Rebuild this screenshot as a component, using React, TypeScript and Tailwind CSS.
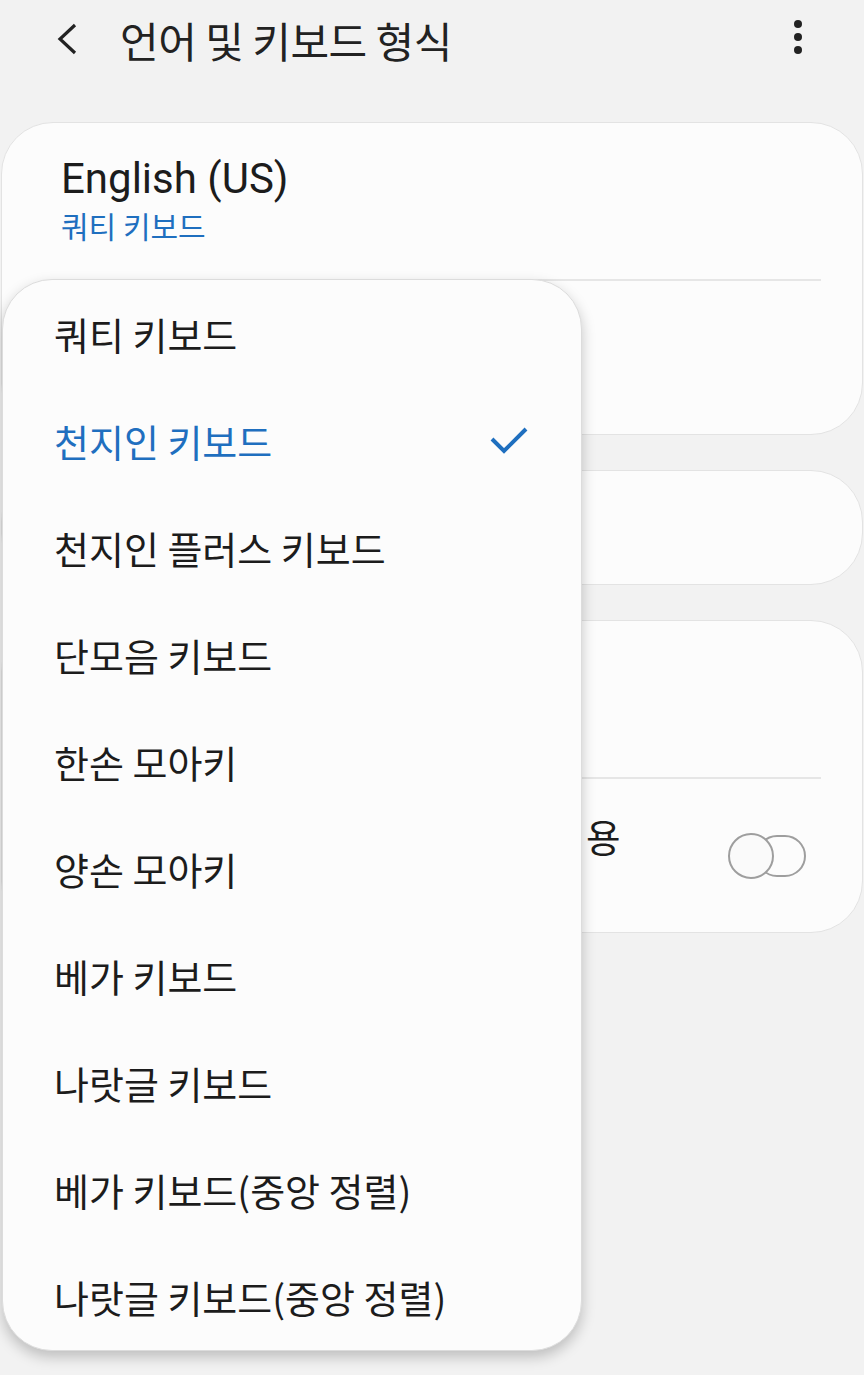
import React from 'react';

const KR = "font-['Noto_Sans_CJK_KR','Noto_Sans',sans-serif]";
const EN = "font-['Roboto','Noto_Sans_CJK_KR',sans-serif]";

const options = [
  '쿼티 키보드',
  '천지인 키보드',
  '천지인 플러스 키보드',
  '단모음 키보드',
  '한손 모아키',
  '양손 모아키',
  '베가 키보드',
  '나랏글 키보드',
  '베가 키보드(중앙 정렬)',
  '나랏글 키보드(중앙 정렬)',
];

function Toggle() {
  return (
    <div className="relative w-[78px] h-[46px]">
      <div className="absolute right-0 top-[2px] w-[50px] h-[42px] rounded-full border-2 border-[#9e9e9e]" />
      <div className="absolute left-0 top-0 w-[46px] h-[46px] rounded-full border-2 border-[#9e9e9e] bg-[#fafafa]" />
    </div>
  );
}

export default function App() {
  const selected = 1;

  return (
    <div className={`relative w-[864px] h-[1375px] bg-[#f2f2f2] overflow-hidden ${KR}`}>
      {/* top bar */}
      <div className="flex items-center h-[80px] pl-[54px] pr-[62px]">
        <svg width="26" height="34" viewBox="0 0 26 34" className="mt-[-2px]">
          <path d="M21 3 L6 17 L21 31" fill="none" stroke="#222" strokeWidth="3.2" />
        </svg>
        <span className="ml-[40px] text-[42px] leading-[50px] text-[#222] tracking-[-0.5px]">언어 및 키보드 형식</span>
        <div className="ml-auto flex flex-col gap-[5px] mt-[-6px]">
          <span className="block w-[8px] h-[8px] rounded-full bg-[#222]" />
          <span className="block w-[8px] h-[8px] rounded-full bg-[#222]" />
          <span className="block w-[8px] h-[8px] rounded-full bg-[#222]" />
        </div>
      </div>

      <div className="flex flex-col gap-[35px] pt-[42px] px-[1px]">
        {/* card 1 */}
        <div className="bg-[#fcfcfc] rounded-[52px] border border-[#e3e3e3] h-[313px] flex flex-col">
          <div className="h-[156px] pl-[59px] pt-[30px]">
            <div className={`${EN} text-[42px] leading-[52px] text-[#1c1c1c]`}>English (US)</div>
            <div className="text-[30px] leading-[36px] text-[#1f6fbf] mt-[2px]">쿼티 키보드</div>
          </div>
          <div className="h-[2px] bg-[#e6e6e6] ml-[59px] mr-[41px]" />
          <div className="flex-1" />
        </div>

        {/* card 2 */}
        <div className="bg-[#fcfcfc] rounded-[52px] border border-[#e3e3e3] h-[115px]" />

        {/* card 3 */}
        <div className="bg-[#fcfcfc] rounded-[52px] border border-[#e3e3e3] h-[313px] flex flex-col">
          <div className="h-[156px]" />
          <div className="h-[2px] bg-[#e6e6e6] ml-[59px] mr-[41px]" />
          <div className="flex-1 flex items-center pl-[59px] pr-[56px]">
            <div className="flex-1 pb-[40px]">
              <div className="text-[37.5px] leading-[44px] text-[#1c1c1c] whitespace-nowrap">한국어 자판에서 영어 문자 입력 허용</div>
            </div>
            <Toggle />
          </div>
        </div>
      </div>

      {/* popup menu */}
      <div className="absolute left-[2px] top-[279px] w-[580px] bg-[#fcfcfc] rounded-[50px] border border-[#dcdcdc] shadow-[0_6px_14px_rgba(0,0,0,0.22)]">
        {options.map((label, i) => (
          <div key={label} className="h-[107px] flex items-center pl-[51px] pr-[52px]">
            <span className={`text-[38px] ${i === selected ? 'text-[#1f6fbf]' : 'text-[#1c1c1c]'}`}>
              {label}
            </span>
            {i === selected && (
              <svg width="40" height="32" viewBox="0 0 40 32" className="ml-auto">
                <path d="M3 14 L15 26 L37 4" fill="none" stroke="#1f6fbf" strokeWidth="4" />
              </svg>
            )}
          </div>
        ))}
      </div>
    </div>
  );
}
